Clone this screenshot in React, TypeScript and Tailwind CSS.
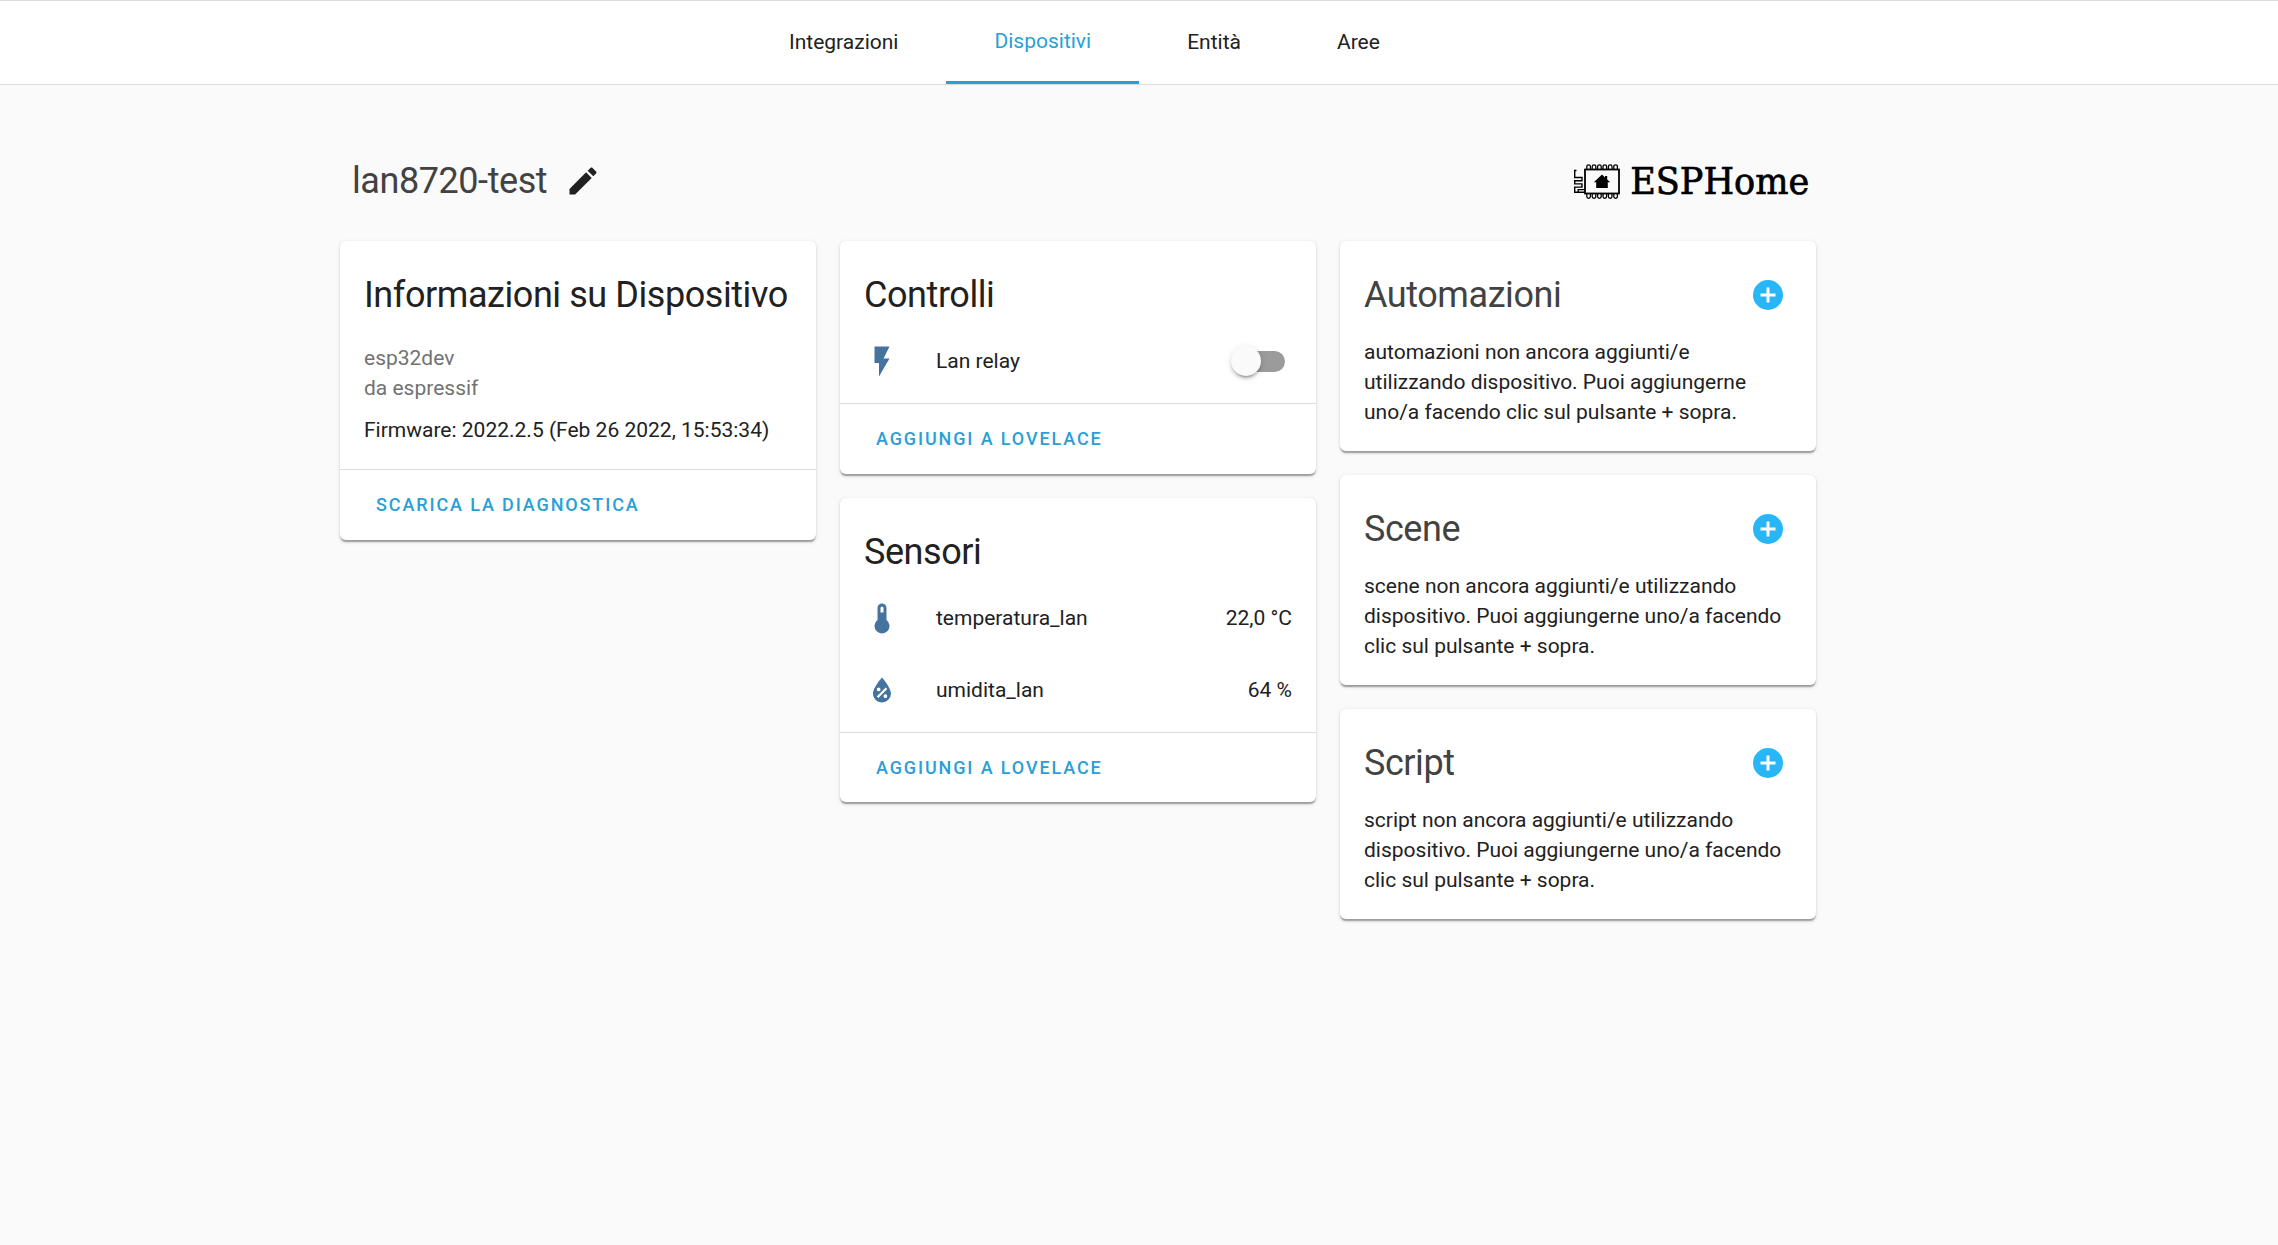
import type { ReactNode } from "react";

const PENCIL =
  "M20.71,7.04C21.1,6.65 21.1,6 20.71,5.63L18.37,3.29C18,2.9 17.35,2.9 16.96,3.29L15.12,5.12L18.87,8.87M3,17.25V21H6.75L17.81,9.93L14.06,6.18L3,17.25Z";
const FLASH = "M7,2V13H10V22L17,10H13L17,2H7Z";
const THERMOMETER =
  "M15 13V5A3 3 0 0 0 9 5V13A5 5 0 1 0 15 13M12 4A1 1 0 0 1 13 5V8H11V5A1 1 0 0 1 12 4Z";
const WATER_PERCENT =
  "M12,3.25C12,3.25 6,10 6,14C6,17.32 8.69,20 12,20A6,6 0 0,0 18,14C18,10 12,3.25 12,3.25M14.47,9.97L15.53,11.03L9.53,17.03L8.47,15.97M9.75,10A1.25,1.25 0 0,1 11,11.25A1.25,1.25 0 0,1 9.75,12.5A1.25,1.25 0 0,1 8.5,11.25A1.25,1.25 0 0,1 9.75,10M14.25,14.5A1.25,1.25 0 0,1 15.5,15.75A1.25,1.25 0 0,1 14.25,17A1.25,1.25 0 0,1 13,15.75A1.25,1.25 0 0,1 14.25,14.5Z";
const PLUS_CIRCLE =
  "M17,13H13V17H11V13H7V11H11V7H13V11H17M12,2A10,10 0 0,0 2,12A10,10 0 0,0 12,22A10,10 0 0,0 22,12A10,10 0 0,0 12,2Z";

function Icon({ path, className = "" }: { path: string; className?: string }) {
  return (
    <svg viewBox="0 0 24 24" className={`size-9 shrink-0 fill-current ${className}`} aria-hidden>
      <path fillRule="evenodd" d={path} />
    </svg>
  );
}

function Tab({ label, active = false }: { label: string; active?: boolean }) {
  return (
    <a
      className={
        active
          ? "flex h-full items-center border-b-3 border-[#2a9fd6] px-12 text-[#2a9fd6]"
          : "flex h-full items-center px-12"
      }
    >
      {label}
    </a>
  );
}

function Card({ children }: { children: ReactNode }) {
  return (
    <section className="overflow-hidden rounded-md bg-white shadow-[0_3px_1.5px_-1.5px_rgba(0,0,0,0.2),0_1.5px_1.5px_0_rgba(0,0,0,0.14),0_1.5px_4.5px_0_rgba(0,0,0,0.12)]">
      {children}
    </section>
  );
}

function Title({ children }: { children: ReactNode }) {
  return (
    <h1 className="px-6 pt-[18px] text-4xl/[72px] font-normal tracking-[-0.012em] whitespace-nowrap">
      {children}
    </h1>
  );
}

function Footer({ label }: { label: string }) {
  return (
    <div className="flex h-[70.5px] items-center border-t border-[#dcdcdc] px-9 pt-px">
      <button className="text-lg/[54px] font-medium tracking-[1.875px] text-[#2a9fd6] uppercase">
        {label}
      </button>
    </div>
  );
}

function Row({ icon, name, children }: { icon: string; name: string; children: ReactNode }) {
  return (
    <div className="flex h-15 items-center">
      <Icon path={icon} className="translate-y-[0.5px] text-[#44739e]" />
      <span className="ml-9 flex-1">{name}</span>
      {children}
    </div>
  );
}

function Toggle() {
  return (
    <button className="relative mr-[7px] h-[21px] w-12 rounded-full bg-[#9b9b9b]">
      <span className="absolute -top-[5px] -left-1.5 size-[30px] rounded-full bg-[#fafafa] shadow-[0_4.5px_1.5px_-3px_rgba(0,0,0,0.2),0_3px_3px_0_rgba(0,0,0,0.14),0_1.5px_7.5px_0_rgba(0,0,0,0.12)]" />
    </button>
  );
}

function EmptyCard({ title, text }: { title: string; text: string }) {
  return (
    <Card>
      <div className="flex items-center justify-between pr-[30px]">
        <h1 className="px-6 pt-[18px] text-4xl/[72px] font-normal tracking-[-0.012em] text-[#424242]">
          {title}
        </h1>
        <Icon path={PLUS_CIRCLE} className="mt-[18px] text-[#29b6f6]" />
      </div>
      <p className="px-6 pt-1.5 pb-6">{text}</p>
    </Card>
  );
}

function Logo() {
  const pins = [0, 1, 2, 3, 4, 5];
  return (
    <svg
      viewBox="0 -4 246 52"
      className="h-[52px] w-[246px] overflow-visible text-black"
      aria-label="ESPHome"
    >
      <g fill="none" stroke="currentColor">
        <rect x="15" y="10.5" width="34" height="24" strokeWidth="1.8" />
        {pins.map((i) => (
          <g key={i} strokeWidth="1.3">
            <path d={`M${16.8 + i * 5.4} 10.5V7.6a1.8 1.8 0 0 1 3.6 0V10.5`} />
            <path d={`M${16.8 + i * 5.4} 34.5v3a1.8 1.8 0 0 0 3.6 0V34.5`} />
          </g>
        ))}
        <path
          strokeWidth="1.4"
          d="M6.5 11.5H4.7V18.5H12V21.7H4.7V24.9H12V28.1H4.7V33.2H15M8.2 33V30.6H15"
        />
      </g>
      <path fill="currentColor" d="M32 15.6l3 2.8V17h2.2v3.4l3 2.8h-2.4V29H26.2v-5.8h-2.4z" />
      <text
        x="60.2"
        y="35.3"
        fill="currentColor"
        stroke="currentColor"
        strokeWidth="0.7"
        textLength="179"
        lengthAdjust="spacingAndGlyphs"
        className="font-['DejaVu_Serif',serif] text-[37px]"
      >
        ESPHome
      </text>
    </svg>
  );
}

export default function App() {
  return (
    <div className="min-h-screen bg-[#fafafa] font-[Roboto,sans-serif] text-[21px]/[30px] text-[#212121]">
      <header className="flex h-[84.5px] border-t border-b border-[#dcdcdc] bg-white pl-[741px]">
        <Tab label="Integrazioni" />
        <Tab label="Dispositivi" active />
        <Tab label="Entità" />
        <Tab label="Aree" />
      </header>

      <main className="ml-[340px] w-[1476px]">
        <div className="flex h-[156.5px] items-center justify-between pt-9 pl-3">
          <div className="flex items-center gap-[18px]">
            <h1 className="text-4xl font-normal tracking-[-0.012em] text-[#424242]">lan8720-test</h1>
            <Icon path={PENCIL} />
          </div>
          <Logo />
        </div>

        <div className="grid grid-cols-3 items-start gap-6">
          <Card>
            <Title>Informazioni su Dispositivo</Title>
            <div className="px-6 pt-3 pb-6">
              <div className="text-[#727272]">esp32dev</div>
              <div className="text-[#727272]">da espressif</div>
              <div className="pt-3">Firmware: 2022.2.5 (Feb 26 2022, 15:53:34)</div>
            </div>
            <Footer label="Scarica la diagnostica" />
          </Card>

          <div className="flex flex-col gap-6">
            <Card>
              <Title>Controlli</Title>
              <div className="px-6 pb-3">
                <Row icon={FLASH} name="Lan relay">
                  <Toggle />
                </Row>
              </div>
              <Footer label="Aggiungi a Lovelace" />
            </Card>
            <Card>
              <Title>Sensori</Title>
              <div className="flex flex-col gap-3 px-6 pb-3">
                <Row icon={THERMOMETER} name="temperatura_lan">
                  22,0 °C
                </Row>
                <Row icon={WATER_PERCENT} name="umidita_lan">
                  64 %
                </Row>
              </div>
              <Footer label="Aggiungi a Lovelace" />
            </Card>
          </div>

          <div className="flex flex-col gap-6">
            <EmptyCard
              title="Automazioni"
              text="automazioni non ancora aggiunti/e utilizzando dispositivo. Puoi aggiungerne uno/a facendo clic sul pulsante + sopra."
            />
            <EmptyCard
              title="Scene"
              text="scene non ancora aggiunti/e utilizzando dispositivo. Puoi aggiungerne uno/a facendo clic sul pulsante + sopra."
            />
            <EmptyCard
              title="Script"
              text="script non ancora aggiunti/e utilizzando dispositivo. Puoi aggiungerne uno/a facendo clic sul pulsante + sopra."
            />
          </div>
        </div>
      </main>
    </div>
  );
}
